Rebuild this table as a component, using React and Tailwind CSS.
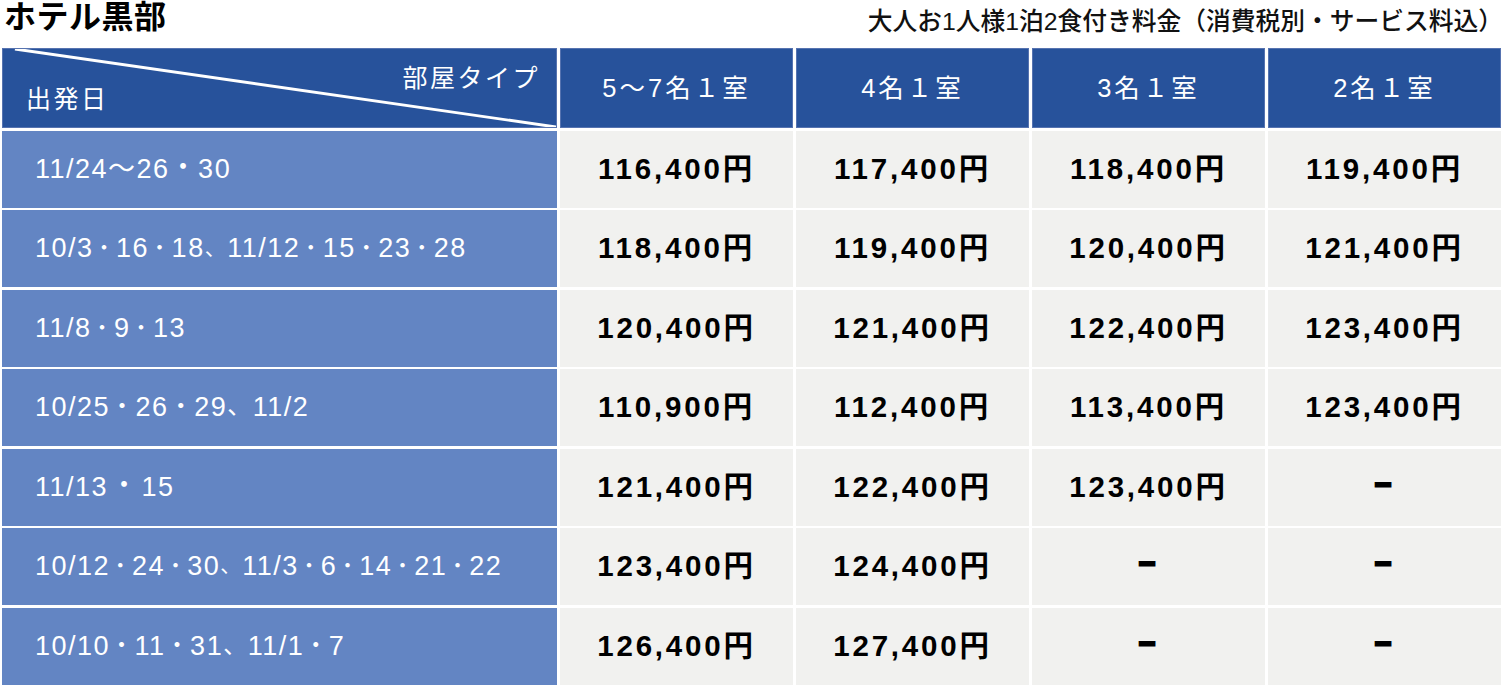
const font = "font-['Liberation_Sans','Noto_Sans_CJK_JP',sans-serif]";

const rooms = ["5〜7名１室", "4名１室", "3名１室", "2名１室"];

// sep: size/spacing of ・ and 、 (the source sets them tighter or looser per row)
const rows = [
  { date: "11/24〜26・30", sep: "text-[27px]", prices: ["116,400円", "117,400円", "118,400円", "119,400円"] },
  { date: "10/3・16・18、11/12・15・23・28", sep: "text-[21px]", prices: ["118,400円", "119,400円", "120,400円", "121,400円"] },
  { date: "11/8・9・13", sep: "text-[21px]", prices: ["120,400円", "121,400円", "122,400円", "123,400円"] },
  { date: "10/25・26・29、11/2", sep: "text-[24px]", prices: ["110,900円", "112,400円", "113,400円", "123,400円"] },
  { date: "11/13・15", sep: "text-[27px] mx-[2.5px]", prices: ["121,400円", "122,400円", "123,400円", "－"] },
  { date: "10/12・24・30、11/3・6・14・21・22", sep: "text-[20.5px]", prices: ["123,400円", "124,400円", "－", "－"] },
  { date: "10/10・11・31、11/1・7", sep: "text-[23px]", prices: ["126,400円", "127,400円", "－", "－"] },
];

function DateText({ text, sep }) {
  const parts = text.split(/([・、])/);
  return (
    <span>
      {parts.map((p, i) =>
        p === "・" || p === "、" ? (
          <span key={i} className={`relative -top-[2px] ${sep}`}>{p}</span>
        ) : (
          <span key={i}>{p}</span>
        )
      )}
    </span>
  );
}

function CornerCell() {
  return (
    <div className="relative bg-[#27529b] border border-[#5673b0]">
      <svg className="absolute inset-0 w-full h-full" viewBox="0 0 555 80" preserveAspectRatio="none">
        <line x1="12" y1="0" x2="555" y2="80" stroke="#fff" strokeWidth="3" />
      </svg>
      <span className="absolute right-[16px] top-[11px] text-white text-[25px] tracking-[2.5px]">部屋タイプ</span>
      <span className="absolute left-[23px] top-[32px] text-white text-[25px] tracking-[2.5px]">出発日</span>
    </div>
  );
}

export default function App() {
  return (
    <div className={`w-[1503px] h-[688px] bg-white overflow-hidden ${font}`}>
      <div className="h-[48px] flex justify-between items-start pl-[4px] pr-0">
        <h1 className="text-[32px] font-bold leading-[34px] tracking-[0.5px] text-black">ホテル黒部</h1>
        <p className="mt-[7px] text-[24.75px] font-medium leading-[30px] text-[#111]">
          大人お1人様1泊2食付き料金（消費税別・サービス料込）
        </p>
      </div>

      <div className="ml-[2px] w-[1499px] grid grid-cols-[555px_repeat(4,1fr)] grid-rows-[80px_repeat(7,77px)] gap-x-[3px] gap-y-[2.5px]">
        <CornerCell />
        {rooms.map((r) => (
          <div
            key={r}
            className="bg-[#27529b] border border-[#5673b0] flex items-center justify-center text-white text-[25.5px] tracking-[3px]"
          >
            {r}
          </div>
        ))}

        {rows.map((row) => [
          <div key={row.date} className="bg-[#6385c3] flex items-center pl-[33px] text-white text-[27px] tracking-[1.5px]">
            <DateText text={row.date} sep={row.sep} />
          </div>,
          ...row.prices.map((p, i) => (
            <div
              key={row.date + i}
              className="bg-[#f1f1ef] flex items-center justify-center text-black text-[29.5px] font-bold tracking-[2.8px]"
            >
              {p === "－" ? (
                <span className="inline-block scale-x-[0.8] scale-y-[1.8]">{p}</span>
              ) : (
                p
              )}
            </div>
          )),
        ])}
      </div>
    </div>
  );
}
